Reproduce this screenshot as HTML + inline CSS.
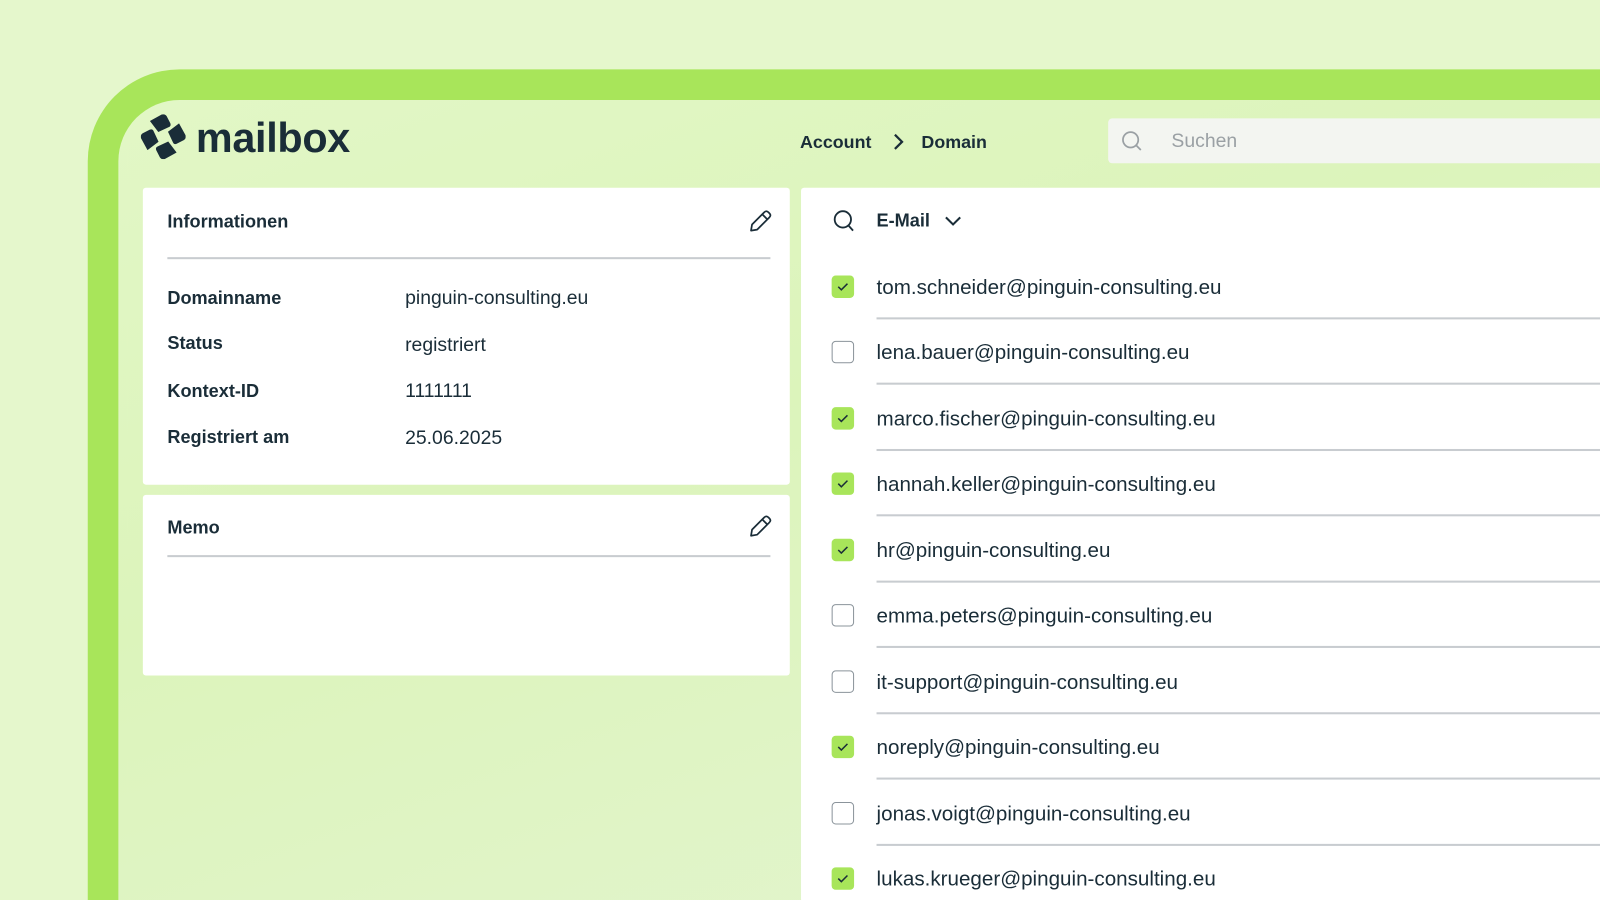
<!DOCTYPE html>
<html><head><meta charset="utf-8"><style>
*{margin:0;padding:0;box-sizing:border-box}
html,body{width:1600px;height:900px;overflow:hidden}
body{background:#e5f7cc;font-family:"Liberation Sans",sans-serif;color:#1a2d38;position:relative}
#w{position:absolute;left:0;top:0;width:1568px;height:882px;overflow:hidden;transform:scale(1.020408);transform-origin:0 0}
.frame{position:absolute;left:86px;top:68px;width:1500px;height:820px;background:#a8e55a;border-top-left-radius:90px}
.inner{position:absolute;left:116px;top:98px;width:1470px;height:790px;background:linear-gradient(160deg,#e2f7c6 0%,#dcf4bb 40%,#e4f5d2 100%);border-top-left-radius:60px}
.abs{position:absolute}
.card{position:absolute;background:#fff;border-radius:3px}
.lbl{position:absolute;left:24px;font-size:17.8px;font-weight:bold}
.val{position:absolute;left:257px;font-size:19px}
.hr{position:absolute;height:1.5px;background:#c8ccd0}
.row{position:absolute;left:0;width:800px;height:64px}
.cb{position:absolute;left:30px;width:22px;height:22px;border-radius:4px;border:1.5px solid #8b949b;background:#fff}
.cb.on{background:#a8e55a;border:none}
.em{position:absolute;left:74px;font-size:20.2px;margin-top:2px}
</style></head><body><div id="w">
<div class="frame"></div>
<div class="inner"></div>
<svg class="abs" style="left:138px;top:112px" width="44" height="44" viewBox="-22 -22 44 44">
<g fill="#1a2d38" transform="rotate(-20)">
<path id="p" d="M-7 -19 L6 -21 Q9 -21 10 -18 L11 -10 Q11 -7 8 -7 L-3 -6 Z"/>
<use href="#p" transform="rotate(90)"/>
<use href="#p" transform="rotate(180)"/>
<use href="#p" transform="rotate(270)"/>
</g></svg>
<div class="abs" style="left:192px;top:112px;font-size:40.5px;font-weight:bold;letter-spacing:-0.3px">mailbox</div>
<div class="abs" style="left:784px;top:129px;font-size:17.5px;font-weight:bold">Account</div>
<svg class="abs" style="left:872px;top:129px" width="16" height="20"><path d="M5 3 L12 10 L5 17" stroke="#1a2d38" stroke-width="2.2" fill="none"/></svg>
<div class="abs" style="left:903px;top:129px;font-size:17.5px;font-weight:bold">Domain</div>
<div class="abs" style="left:1086px;top:116px;width:520px;height:44px;background:#f3f5f1;border-radius:4px"></div>
<svg class="abs" style="left:1098px;top:127px" width="24" height="24"><circle cx="10" cy="10" r="7.5" stroke="#9aa0a4" stroke-width="1.7" fill="none"/><path d="M15.5 15.5 L20 20" stroke="#9aa0a4" stroke-width="1.7"/></svg>
<div class="abs" style="left:1148px;top:128px;font-size:19px;color:#9aa0a4">Suchen</div>

<div class="card" style="left:140px;top:184px;width:634px;height:291px">
<div class="lbl" style="top:23px">Informationen</div>
<svg class="abs" style="left:592px;top:20px" width="26" height="26"><path d="M4 22 L5 16 L17 4 Q19 2 21 4 L22 5 Q24 7 22 9 L10 21 Z M15 6 L20 11" stroke="#1a2d38" stroke-width="1.7" fill="none" stroke-linejoin="round"/></svg>
<div class="hr" style="left:24px;top:68px;width:591px"></div>
<div class="lbl" style="top:98px">Domainname</div><div class="val" style="top:98px">pinguin-consulting.eu</div>
<div class="lbl" style="top:142px">Status</div><div class="val" style="top:144px">registriert</div>
<div class="lbl" style="top:189px">Kontext-ID</div><div class="val" style="top:189px">1111111</div>
<div class="lbl" style="top:234px">Registriert am</div><div class="val" style="top:235px">25.06.2025</div>
</div>
<div class="card" style="left:140px;top:485px;width:634px;height:177px">
<div class="lbl" style="top:22px">Memo</div>
<svg class="abs" style="left:592px;top:18px" width="26" height="26"><path d="M4 22 L5 16 L17 4 Q19 2 21 4 L22 5 Q24 7 22 9 L10 21 Z M15 6 L20 11" stroke="#1a2d38" stroke-width="1.7" fill="none" stroke-linejoin="round"/></svg>
<div class="hr" style="left:24px;top:59px;width:591px"></div>
</div>

<div class="card" style="left:785px;top:184px;width:790px;height:700px">
<svg class="abs" style="left:30px;top:21px" width="26" height="26"><circle cx="11" cy="10" r="8" stroke="#1a2d38" stroke-width="1.8" fill="none"/><path d="M16.5 16 L21 21" stroke="#1a2d38" stroke-width="1.8"/></svg>
<div class="abs" style="left:74px;top:22px;font-size:17.8px;font-weight:bold">E-Mail</div>
<svg class="abs" style="left:140px;top:25px" width="20" height="16"><path d="M2 4 L9 11 L16 4" stroke="#1a2d38" stroke-width="2" fill="none"/></svg>

<div class="row" style="top:65px"><div class="cb on" style="top:21px"><svg width="22" height="22"><path d="M6.5 11 L9.5 14 L15.5 8" stroke="#1a2d38" stroke-width="1.5" fill="none"/></svg></div><div class="em" style="top:20px">tom.schneider@pinguin-consulting.eu</div><div class="hr" style="left:74px;top:62px;width:760px"></div></div>
<div class="row" style="top:130px"><div class="cb" style="top:20px"></div><div class="em" style="top:19px">lena.bauer@pinguin-consulting.eu</div><div class="hr" style="left:74px;top:61px;width:760px"></div></div>
<div class="row" style="top:194px"><div class="cb on" style="top:21px"><svg width="22" height="22"><path d="M6.5 11 L9.5 14 L15.5 8" stroke="#1a2d38" stroke-width="1.5" fill="none"/></svg></div><div class="em" style="top:20px">marco.fischer@pinguin-consulting.eu</div><div class="hr" style="left:74px;top:62px;width:760px"></div></div>
<div class="row" style="top:259px"><div class="cb on" style="top:20px"><svg width="22" height="22"><path d="M6.5 11 L9.5 14 L15.5 8" stroke="#1a2d38" stroke-width="1.5" fill="none"/></svg></div><div class="em" style="top:19px">hannah.keller@pinguin-consulting.eu</div><div class="hr" style="left:74px;top:61px;width:760px"></div></div>
<div class="row" style="top:323px"><div class="cb on" style="top:21px"><svg width="22" height="22"><path d="M6.5 11 L9.5 14 L15.5 8" stroke="#1a2d38" stroke-width="1.5" fill="none"/></svg></div><div class="em" style="top:20px">hr@pinguin-consulting.eu</div><div class="hr" style="left:74px;top:62px;width:760px"></div></div>
<div class="row" style="top:388px"><div class="cb" style="top:20px"></div><div class="em" style="top:19px">emma.peters@pinguin-consulting.eu</div><div class="hr" style="left:74px;top:61px;width:760px"></div></div>
<div class="row" style="top:452px"><div class="cb" style="top:21px"></div><div class="em" style="top:20px">it-support@pinguin-consulting.eu</div><div class="hr" style="left:74px;top:62px;width:760px"></div></div>
<div class="row" style="top:517px"><div class="cb on" style="top:20px"><svg width="22" height="22"><path d="M6.5 11 L9.5 14 L15.5 8" stroke="#1a2d38" stroke-width="1.5" fill="none"/></svg></div><div class="em" style="top:19px">noreply@pinguin-consulting.eu</div><div class="hr" style="left:74px;top:61px;width:760px"></div></div>
<div class="row" style="top:581px"><div class="cb" style="top:21px"></div><div class="em" style="top:20px">jonas.voigt@pinguin-consulting.eu</div><div class="hr" style="left:74px;top:62px;width:760px"></div></div>
<div class="row" style="top:646px"><div class="cb on" style="top:20px"><svg width="22" height="22"><path d="M6.5 11 L9.5 14 L15.5 8" stroke="#1a2d38" stroke-width="1.5" fill="none"/></svg></div><div class="em" style="top:19px">lukas.krueger@pinguin-consulting.eu</div></div>
</div>
</div></body></html>
